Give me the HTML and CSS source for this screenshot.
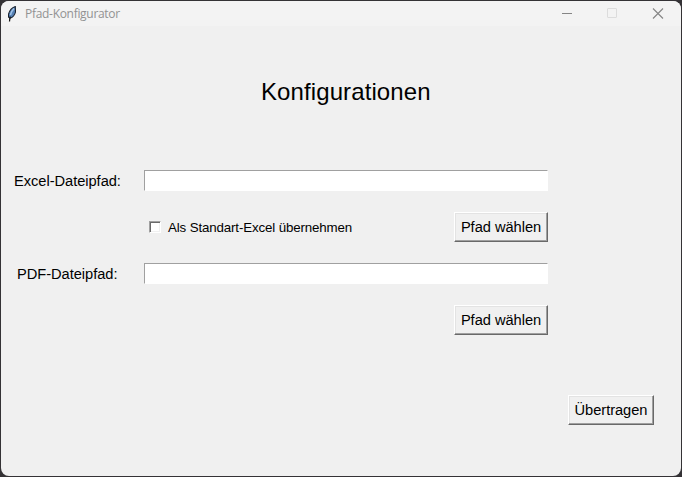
FILE: index.html
```html
<!DOCTYPE html>
<html lang="de">
<head>
<meta charset="utf-8">
<title>Pfad-Konfigurator</title>
<link rel="stylesheet" href="styles.css">
</head>
<body>
<div class="window">
  <header class="titlebar">
    <svg class="feather" width="12" height="16" viewBox="0 0 12 16">
      <path d="M8.300 .6C5.500 1.500 2.600 4.500 1.600 8L1.500 11 3 12.300C5.500 11.500 7.800 9 8.500 6Z" fill="#5580b5" stroke="#17202c" stroke-width="1.100"/>
      <path d="M7 2.500C5 4.500 4 6.500 3.400 9" fill="none" stroke="#9fc3e8" stroke-width="1.600"/>
      <path d="M3.300 10.500C2.900 12 2.600 13.500 2.500 15.500" fill="none" stroke="#111" stroke-width="1.200"/>
    </svg>
    <span class="title">Pfad-Konfigurator</span>
    <div class="controls">
      <svg width="46" height="25" viewBox="0 0 46 25"><path d="M18 12.500H28" stroke="#858585"/></svg>
      <svg width="46" height="25" viewBox="0 0 46 25"><rect x="17.500" y="7.500" width="9" height="9" rx=".5" fill="none" stroke="#dcdcdc"/></svg>
      <svg width="46" height="25" viewBox="0 0 46 25"><path d="M17 7.500L27 17.500M27 7.500L17 17.500" fill="none" stroke="#858585" stroke-width="1.100"/></svg>
    </div>
  </header>
  <main class="content">
    <h1 class="heading">Konfigurationen</h1>
    <div class="row row-excel">
      <label class="label" for="excel">Excel-Dateipfad:</label>
      <input class="entry" id="excel" type="text">
    </div>
    <div class="row row-options">
      <label class="option"><span class="check"></span><span class="option-text">Als Standart-Excel übernehmen</span></label>
      <button class="button">Pfad wählen</button>
    </div>
    <div class="row row-pdf">
      <label class="label label-pdf" for="pdf">PDF-Dateipfad:</label>
      <input class="entry" id="pdf" type="text">
    </div>
    <div class="row row-browse">
      <button class="button">Pfad wählen</button>
    </div>
    <div class="row row-submit">
      <button class="button button-submit">Übertragen</button>
    </div>
  </main>
</div>
</body>
</html>
```
FILE: styles.css
```css
* { box-sizing: border-box; }

body {
  margin: 0;
  padding: 1px;
  height: 477px;
  overflow: hidden;
  background: #343235;
  font-family: "Liberation Sans", Arial, sans-serif;
  color: #000;
}

.window {
  width: 680px;
  height: 475px;
  border-radius: 8px;
  background: #f0f0f0;
  overflow: hidden;
}

.titlebar {
  display: flex;
  align-items: center;
  height: 25px;
  padding-left: 6px;
  background: #f3f3f3;
}

.feather { flex: none; }

.title {
  margin-left: 6px;
  padding-top: 1px;
  font: 12px/16px "Open Sans", "Noto Sans", sans-serif;
  letter-spacing: -0.3px;
  color: #929292;
}

.controls {
  display: flex;
  margin-left: auto;
  margin-right: -1px;
}

.content {
  display: flex;
  flex-direction: column;
  padding-left: 13px;
}

.heading {
  width: 170px;
  margin: 52px 0 0 247px;
  font-size: 24px;
  line-height: 28px;
  font-weight: 400;
  letter-spacing: 0.1px;
  white-space: nowrap;
}

.row {
  display: flex;
  align-items: center;
  width: 534px;
}

.row-excel { margin-top: 64px; }
.row-options { height: 30px; margin-top: 21px; padding-left: 135px; }
.row-pdf { margin-top: 21px; }
.row-browse { margin-top: 21px; }
.row-submit { width: 640px; margin-top: 60px; }

.label {
  width: 130px;
  height: 21px;
  padding-top: 1px;
  font-size: 14.67px;
  line-height: 21px;
  white-space: nowrap;
  letter-spacing: -0.04px;
}

.label-pdf { padding-left: 3px; }

.entry {
  width: 404px;
  height: 21px;
  padding: 1px 3px;
  border: 1px solid;
  border-color: #a0a0a0 #fff #fff #a0a0a0;
  border-radius: 0;
  outline: 0;
  background: #fff;
  font: 14.67px "Liberation Sans", sans-serif;
}

.option {
  display: flex;
  align-items: center;
}

.check {
  width: 12px;
  height: 12px;
  margin-right: 7px;
  border: 1px solid;
  border-color: #a0a0a0 #fff #fff #a0a0a0;
  background: #fff;
  box-shadow: inset 1px 1px #696969, inset -1px -1px #f0f0f0;
}

.option-text {
  padding-top: 1px;
  font-size: 13.33px;
  line-height: 16px;
  letter-spacing: -0.14px;
  white-space: nowrap;
}

.button {
  width: 94px;
  height: 30px;
  margin-left: auto;
  padding: 0;
  border: 1px solid;
  border-color: #fff #696969 #696969 #fff;
  border-radius: 0;
  background: #f0f0f0;
  box-shadow: inset -1px -1px #a0a0a0, inset 1px 1px #e3e3e3;
  font: 14.67px/20px "Liberation Sans", Arial, sans-serif;
  letter-spacing: -0.04px;
  color: #000;
  white-space: nowrap;
}

.button-submit { width: 86px; }
```
